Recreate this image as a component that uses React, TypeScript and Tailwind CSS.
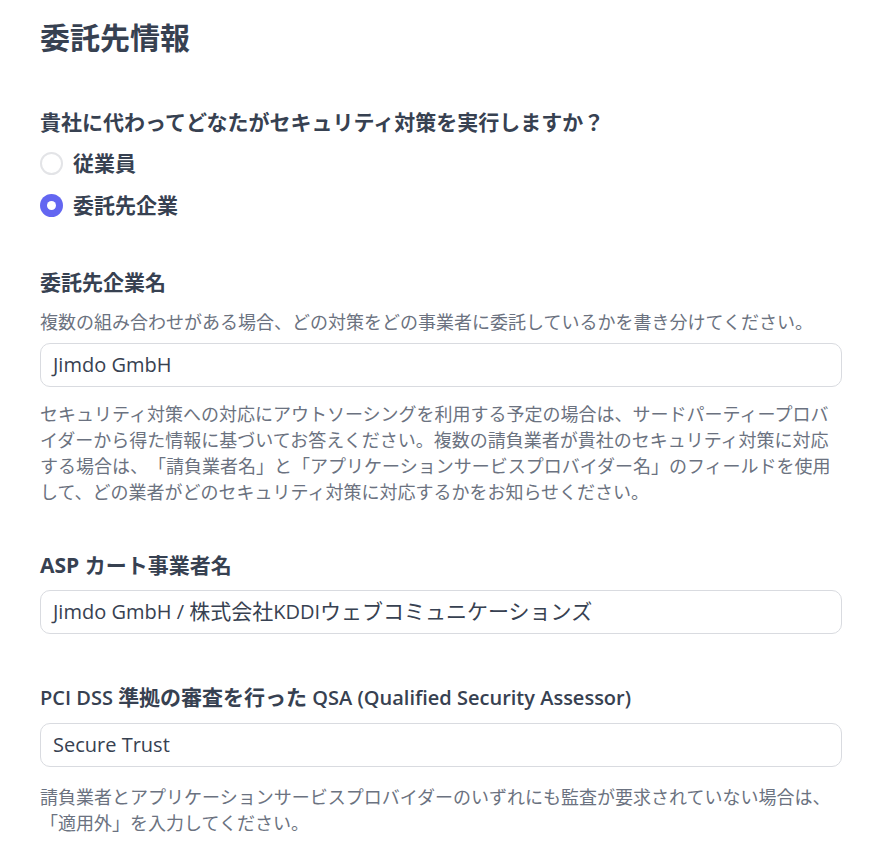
import React from 'react';

const FONT = { fontFamily: '"Open Sans", "Noto Sans CJK JP", sans-serif' };

// ============================================
// SMALL PARTS
// ============================================
const Radio = ({ checked, label }: { checked?: boolean; label: string }) => (
  <label className="flex h-[42px] items-center gap-[10px]">
    {checked ? (
      <span className="flex h-[23px] w-[23px] items-center justify-center rounded-full bg-[#6366f1]">
        <span className="h-[9px] w-[9px] rounded-full bg-white" />
      </span>
    ) : (
      <span className="h-[23px] w-[23px] rounded-full border-2 border-[#e3e4e7] bg-white" />
    )}
    <span className="text-[21px] font-bold leading-[30px] text-[#374151]">{label}</span>
  </label>
);

const Field = ({ children }: { children: React.ReactNode }) => (
  <div className="flex h-[44px] items-center rounded-[10px] border border-[#d9dbe0] bg-white px-[12px] text-[20px] text-[#374151]">
    <span>{children}</span>
  </div>
);

// japanese glyphs in the inputs run a little wider than the latin ones
const Ja = ({ children }: { children: React.ReactNode }) => <span className="text-[21px]">{children}</span>;
// latin runs in headings are a touch narrower than open sans bold
const La = ({ children }: { children: React.ReactNode }) => <span className="text-[20px] font-semibold">{children}</span>;

const Heading = ({ children }: { children: React.ReactNode }) => (
  <h3 className="text-[21px] font-bold leading-[30px] text-[#374151]">{children}</h3>
);

const Help = ({ children }: { children: React.ReactNode }) => (
  <p className="text-[18px] leading-[26px] text-[#6b7280] [text-spacing-trim:space-all]">{children}</p>
);

// ============================================
// PAGE
// ============================================
export default function App() {
  return (
    <div style={FONT} className="min-h-[868px] bg-white pl-[40px] pr-[43px] pt-[17px]">
      <h2 className="text-[30px] font-bold leading-[42px] text-[#374151]">委託先情報</h2>

      <div className="mt-[48px]">
        <Heading>貴社に代わってどなたがセキュリティ対策を実行しますか？</Heading>
        <div className="mt-[5px] flex flex-col">
          <Radio label="従業員" />
          <Radio checked label="委託先企業" />
        </div>
      </div>

      <div className="mt-[41px]">
        <Heading>委託先企業名</Heading>
        <div className="mt-[12px]">
          <Help>複数の組み合わせがある場合、どの対策をどの事業者に委託しているかを書き分けてください。</Help>
        </div>
        <div className="mt-[8px]">
          <Field>Jimdo GmbH</Field>
        </div>
        <div className="mt-[14px]">
          <Help>
            セキュリティ対策への対応にアウトソーシングを利用する予定の場合は、サードパーティープロバイダーから得た情報に基づいてお答えください。複数の請負業者が貴社のセキュリティ対策に対応する場合は、「請負業者名」と「アプリケーションサービスプロバイダー名」のフィールドを使用して、どの業者がどのセキュリティ対策に対応するかをお知らせください。
          </Help>
        </div>
      </div>

      <div className="mt-[45px]">
        <Heading>ASP カート事業者名</Heading>
        <div className="mt-[10px]">
          <Field>
            Jimdo GmbH / <Ja>株式会社</Ja>KDDI<Ja>ウェブコミュニケーションズ</Ja>
          </Field>
        </div>
      </div>

      <div className="mt-[48px]">
        <Heading>
          <La>PCI DSS </La>準拠の審査を行った<La> QSA (Qualified Security Assessor)</La>
        </Heading>
        <div className="mt-[10px]">
          <Field>Secure Trust</Field>
        </div>
        <div className="mt-[17px]">
          <Help>請負業者とアプリケーションサービスプロバイダーのいずれにも監査が要求されていない場合は、「適用外」を入力してください。</Help>
        </div>
      </div>
    </div>
  );
}
